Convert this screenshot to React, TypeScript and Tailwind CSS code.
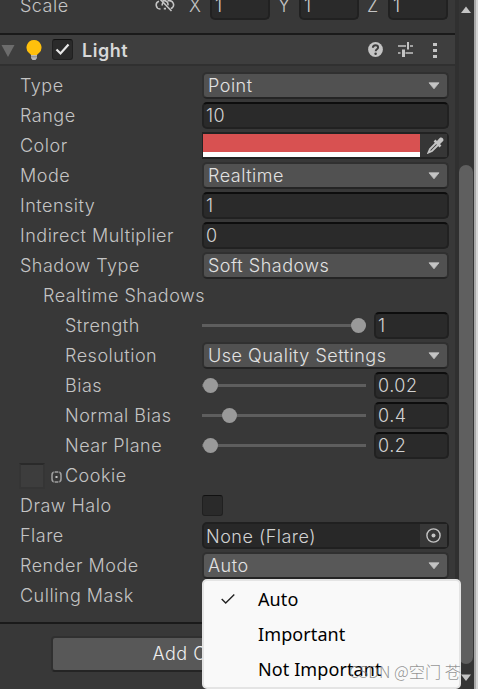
import React from "react";

const insetField = "border-2 border-t-[#0d0d0d] border-x-[#212121] border-b-[#212121] bg-[#2a2a2a] rounded-[5px]";

function Row({ label, indent = "pl-5", children }: { label: string; indent?: string; children?: React.ReactNode }) {
  return (
    <div className="flex h-[30px] shrink-0 items-center pb-px">
      <div className={`w-[202px] shrink-0 whitespace-nowrap leading-[27px] ${indent}`}>{label}</div>
      {children}
    </div>
  );
}

function Caret() {
  return (
    <svg width="12" height="8" viewBox="0 0 12 8" className="mr-[7px] mt-px shrink-0">
      <path d="M1 .8h10L6 6.8z" fill="#c4c4c4" stroke="#c4c4c4" strokeWidth=".8" strokeLinejoin="round" />
    </svg>
  );
}

function Select({ value, active = false }: { value: string; active?: boolean }) {
  return (
    <div className={`flex h-[27px] w-[247px] items-center justify-between rounded-[5px] border-2 border-[#303030] border-b-[#242424] pl-[4px] text-[#e2e2e2] ${active ? "bg-[#585858]" : "bg-[#515151]"}`}>
      <span className="leading-[23px]">{value}</span>
      <Caret />
    </div>
  );
}

function Field({ value, small = false }: { value: string; small?: boolean }) {
  return (
    <div className={`flex h-[27px] items-center pl-[2px] leading-[23px] text-[#d2d2d2] ${insetField} ${small ? "w-[75px]" : "w-[247px]"}`}>
      {value}
    </div>
  );
}

function Slider({ value, offset }: { value: string; offset: string }) {
  return (
    <>
      <div className="mr-2 flex h-[15px] w-[164px] items-center bg-[linear-gradient(#5e5e5e,#5e5e5e)] bg-[length:100%_3px] bg-center bg-no-repeat">
        <div className={`h-[15px] w-[15px] rounded-full bg-[#999999] ${offset}`} />
      </div>
      <Field value={value} small />
    </>
  );
}

function AxisField({ axis, width }: { axis: string; width: string }) {
  return (
    <>
      <span className="w-[21px] shrink-0">{axis}</span>
      <div className={`flex h-[27px] shrink-0 items-center pl-[3px] text-[#d2d2d2] ${insetField} ${width}`}>1</div>
    </>
  );
}

function Header() {
  return (
    <div className="flex h-[33px] shrink-0 items-center border-b-2 border-t-2 border-b-[#303030] border-t-[#1a1a1a] bg-[#3e3e3e]">
      <svg width="14" height="12" viewBox="0 0 14 12" className="ml-px mt-[2px]">
        <path d="M.5 0h13L7 12z" fill="#6c6c6c" />
      </svg>
      <svg width="16" height="20" viewBox="0 0 16 20" className="ml-[11px]">
        <path d="M8 0a7.4 7.4 0 0 0-5 12.9c1 .9 1.6 1.4 2 2.1h6c.4-.7 1-1.2 2-2.1A7.4 7.4 0 0 0 8 0z" fill="#ffc00c" />
        <path d="M5 15h6v3l-1.5 2h-3L5 18z" fill="#b8b8b8" />
        <path d="M5 16.8h6" stroke="#8a8a8a" />
      </svg>
      <div className="ml-[10px] flex h-[21px] w-[21px] items-center justify-center rounded-[3px] border border-[#202020] border-t-[#111111] bg-[#2a2a2a]">
        <svg width="15" height="13" viewBox="0 0 15 13">
          <path d="M1.5 6.5l4 4 8-9" fill="none" stroke="#e8e8e8" strokeWidth="2.2" />
        </svg>
      </div>
      <span className="ml-[9px] mt-[2px] font-semibold tracking-[0.5px] text-[#d8d8d8]">Light</span>
      <svg width="15" height="15" viewBox="0 0 15 15" className="ml-auto">
        <circle cx="7.5" cy="7.5" r="7.4" fill="#c4c4c4" />
        <path d="M4.9 5.7c0-3.4 5.2-3.2 5.2-.2 0 1.8-2.4 1.7-2.4 3.7" fill="none" stroke="#3e3e3e" strokeWidth="2" />
        <circle cx="7.6" cy="11.8" r="1.25" fill="#3e3e3e" />
      </svg>
      <svg width="15" height="15" viewBox="0 0 15 15" className="ml-[15px]">
        <path d="M0 4h8M12 4h3M0 11h2.5M7.5 11H15" stroke="#c4c4c4" strokeWidth="1.3" />
        <path d="M10 0v7.5" stroke="#c4c4c4" strokeWidth="2" />
        <path d="M5.5 7.5V15" stroke="#c4c4c4" strokeWidth="3" />
      </svg>
      <svg width="4" height="16" viewBox="0 0 4 16" className="ml-[20px] mr-[18px]">
        <path d="M0 1h4v3H0zM0 7h4v3H0zM0 13h4v3H0z" fill="#c4c4c4" />
      </svg>
    </div>
  );
}

function Popup() {
  return (
    <div className="absolute left-[202px] top-[579px] flex h-[110px] w-[259px] flex-col rounded-[5px] border-2 border-[#e4e4e4] bg-[#f9f9f9] font-['Noto_Sans','Noto_Sans_CJK_SC',sans-serif] text-[18px] font-normal tracking-[0.1px] text-black">
      {["Auto", "Important", "Not Important"].map((item, i) => (
        <div key={item} className="flex h-[35px] shrink-0 items-center">
          <div className="w-[54px] pl-[17px]">
            {i === 0 && (
              <svg width="14" height="10" viewBox="0 0 14 10">
                <path d="M.7 5l4 4L13.3.6" fill="none" stroke="#222" strokeWidth="1.4" />
              </svg>
            )}
          </div>
          {item}
        </div>
      ))}
    </div>
  );
}

export default function App() {
  return (
    <div className="relative flex h-[689px] w-[478px] overflow-hidden bg-[#383838] font-['Inter',sans-serif] text-[18px] font-[350] leading-[24px] tracking-[0.5px] text-[#c4c4c4]">
      <div className="flex w-[455px] flex-col">
        <div className="-mt-[9px] mb-3 flex h-[30px] shrink-0 items-center pl-5">
          <span className="w-[135px]">Scale</span>
          <svg width="20" height="17" viewBox="0 0 20 17" className="mr-[14px] mt-[-3px] shrink-0">
            <g fill="none" stroke="#c4c4c4" strokeWidth="1.6">
              <path d="M5.5 13H5a4 4 0 0 1-1-7.8" />
              <path d="M7.5 4.6h2.2a4 4 0 0 1 3.2 4.8M11 12.6H8.8" />
              <path d="M7.2 9.5a4 4 0 0 1 1.5-3.6M12.5 4.6h1.8a4.2 4.2 0 0 1 3 7.2l-1.5.8" />
              <path d="M4 2l12.5 13" />
            </g>
          </svg>
          <AxisField axis="X" width="w-[60px] mr-[8px]" />
          <AxisField axis="Y" width="w-[60px] mr-[8px]" />
          <AxisField axis="Z" width="w-[60px]" />
        </div>
        <Header />
        <div className="flex flex-col pt-[5px]">
          <Row label="Type"><Select value="Point" /></Row>
          <Row label="Range"><Field value="10" /></Row>
          <Row label="Color">
            <div className="flex h-[27px] w-[247px] rounded-r-[5px] border-x border-y-2 border-r-2 border-[#222222]">
              <div className="w-[217px] border-b-[5px] border-white bg-[#d85151]" />
              <div className="flex flex-1 items-center justify-end bg-[#363636] pr-[3px]">
                <svg width="17" height="17" viewBox="0 0 17 17">
                  <path d="M9 6L3 12l-1.5 3.5L5 14l6-6" fill="none" stroke="#c4c4c4" strokeWidth="1.9" />
                  <path d="M7.5 3.5l6 6" stroke="#c4c4c4" strokeWidth="2.6" />
                  <path d="M9 5l3.7-3.9c2.1-1.7 4.9 1.1 3.2 3.2L12 8z" fill="#c4c4c4" />
                </svg>
              </div>
            </div>
          </Row>
          <Row label="Mode"><Select value="Realtime" /></Row>
          <Row label="Intensity"><Field value="1" /></Row>
          <Row label="Indirect Multiplier"><Field value="0" /></Row>
          <Row label="Shadow Type"><Select value="Soft Shadows" /></Row>
          <Row label="Realtime Shadows" indent="pl-[43px]" />
          <Row label="Strength" indent="pl-[65px]"><Slider value="1" offset="ml-[149px]" /></Row>
          <Row label="Resolution" indent="pl-[65px]"><Select value="Use Quality Settings" /></Row>
          <Row label="Bias" indent="pl-[65px]"><Slider value="0.02" offset="ml-px" /></Row>
          <Row label="Normal Bias" indent="pl-[65px]"><Slider value="0.4" offset="ml-[20px]" /></Row>
          <Row label="Near Plane" indent="pl-[65px]"><Slider value="0.2" offset="ml-px" /></Row>
          <div className="flex h-[30px] shrink-0 items-center pl-5">
            <div className="-ml-px h-[26px] w-[26px] border-2 border-[#353535] border-t-[#2a2a2a] bg-[#3d3d3d]" />
            <svg width="11" height="12" viewBox="0 0 11 12" className="ml-[6px] mr-[3px] mt-px">
              <rect x="1" y="1" width="9" height="10" rx="3" fill="none" stroke="#a0a0a0" strokeWidth="1.5" />
              <path d="M3.2 0v2M7.8 0v2M3.2 10v2M7.8 10v2" stroke="#383838" strokeWidth=".9" />
              <path d="M4.5 6h2" stroke="#c4c4c4" strokeWidth="2" />
            </svg>
            <span>Cookie</span>
          </div>
          <Row label="Draw Halo">
            <div className="h-[21px] w-[21px] rounded-[3px] border border-[#202020] border-t-[#111111] bg-[#2a2a2a]" />
          </Row>
          <Row label="Flare">
            <div className="flex h-[27px] w-[247px] items-center rounded-[5px] border-2 border-[#202020] bg-[#282828] pl-[2px] text-[#d2d2d2]">
              <span className="w-[214px] pt-[2px]">None (Flare)</span>
              <div className="flex h-full flex-1 items-center justify-center bg-[#373737]">
                <svg width="15" height="15" viewBox="0 0 15 15">
                  <circle cx="7.5" cy="7.5" r="6.6" fill="none" stroke="#c4c4c4" strokeWidth="1.4" />
                  <circle cx="7.5" cy="7.5" r="2" fill="#c4c4c4" />
                </svg>
              </div>
            </div>
          </Row>
          <Row label="Render Mode"><Select value="Auto" active /></Row>
          <Row label="Culling Mask" />
        </div>
        <div className="mt-[11px] h-[2px] shrink-0 bg-[#1a1a1a]" />
        <div className="ml-[51px] mt-[12px] flex h-[36px] w-[354px] shrink-0 items-center justify-center rounded-[4px] border-2 border-[#303030] border-b-[#242424] bg-[#585858] pr-[8px] text-[#eeeeee]">
          Add Component
        </div>
      </div>
      <div className="flex w-[19px] flex-col items-start border-l-4 border-[#303030] bg-[#353535]">
        <svg width="12" height="8" viewBox="0 0 12 8" className="ml-px mt-[6px] shrink-0">
          <path d="M6 .5L11 7H1z" fill="#c4c4c4" />
        </svg>
        <div className="mt-[151px] h-[499px] w-[14px] shrink-0 rounded-[7px] bg-[#5f5f5f]" />
        <svg width="12" height="8" viewBox="0 0 12 8" className="ml-px mt-[10px] shrink-0">
          <path d="M1 .5h10L6 7z" fill="#c4c4c4" />
        </svg>
      </div>
      <div className="w-1 border-l-2 border-[#a9a9a9] bg-[#d5d5d5]" />
      <Popup />
      <div className="absolute left-[349px] top-[659px] whitespace-nowrap font-['Noto_Sans_CJK_SC',sans-serif] text-[16.2px] font-light tracking-normal text-[#777777]/80">
        CSDN @空门 苍
      </div>
    </div>
  );
}
